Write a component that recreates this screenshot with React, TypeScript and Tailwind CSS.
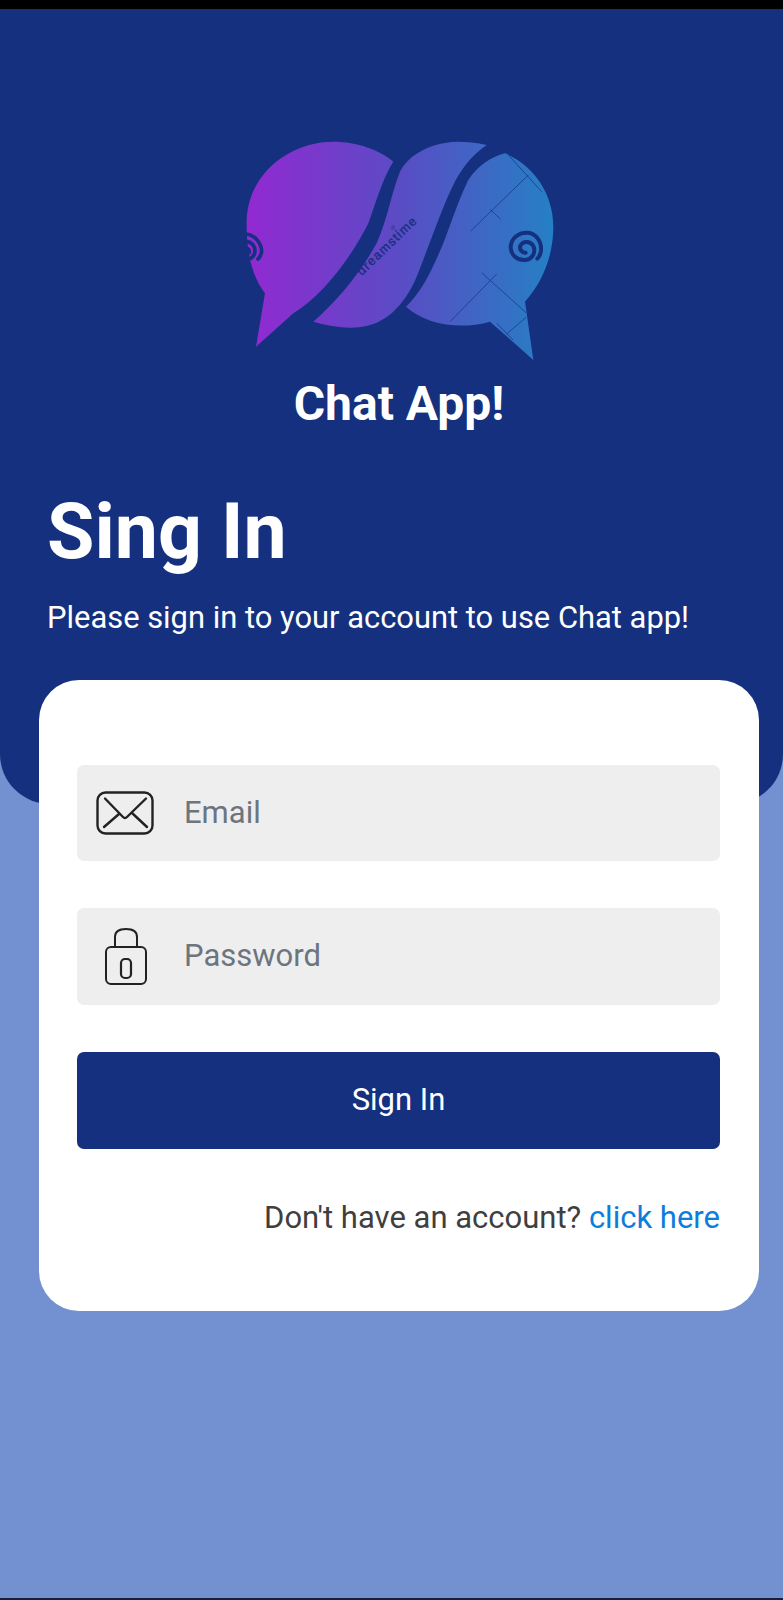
import React from "react";

function Logo() {
  return (
    <svg width="340" height="260" viewBox="0 0 1020 780" className="block">
      <defs>
        <linearGradient id="lg" gradientUnits="userSpaceOnUse" x1="80" y1="0" x2="1000" y2="0">
          <stop offset="0" stopColor="#9229d2" />
          <stop offset="0.5" stopColor="#5a4cc4" />
          <stop offset="1" stopColor="#2580c4" />
        </linearGradient>
      </defs>
      <path
        fill="url(#lg)"
        d="M108 680 L135 520 C95 470 78 390 80 300 C85 160 210 65 340 65 C410 65 480 90 520 125 C490 170 470 240 445 310 C395 410 310 525 220 580 Z"
      />
      <path
        fill="url(#lg)"
        d="M800 75 C770 68 740 65 710 65 C630 68 565 105 540 155 C515 215 505 290 470 370 C420 460 350 545 280 605 C340 622 400 630 450 615 C520 595 565 530 590 470 C630 370 660 280 695 205 C720 150 755 105 800 75 Z"
      />
      <path
        fill="url(#lg)"
        d="M855 100 C940 135 1000 220 1000 320 C1000 410 965 490 915 545 L940 720 L810 605 C720 630 620 615 558 560 C610 510 640 440 670 370 C700 290 720 230 745 180 C775 135 815 110 855 100 Z"
      />
      <g fill="none" stroke="#15307e" strokeWidth="11" strokeLinecap="round">
        <path d="M78 342 C105 345 125 370 125 395 C123 405 120 412 114 417" />
        <path d="M78 365 C95 365 105 378 105 392 C105 402 100 410 92 415" />
        <path d="M78 385 C85 385 90 390 88 398" />
      </g>
      <path
        fill="none"
        stroke="#15307e"
        strokeWidth="12"
        strokeLinecap="round"
        d="M917 398 C903 398 896 385 903 374 C912 362 932 364 940 378 C948 396 938 418 916 420 C892 422 872 405 872 380 C874 355 895 338 920 338 C945 338 965 360 963 392 C962 402 958 410 952 416"
      />
      <g fill="none" stroke="#15307e" strokeWidth="2.5" opacity="0.8">
        <path d="M752 333 L925 165" />
        <path d="M810 268 L842 298" />
        <path d="M865 105 L965 215" />
        <path d="M690 605 L830 462" />
        <path d="M785 458 L918 578" />
        <path d="M860 642 L918 592" />
        <path d="M830 610 L880 660" />
      </g>
      <text
        x="425"
        y="468"
        fontSize="38"
        fill="#15307e"
        stroke="#15307e"
        strokeWidth="1"
        textLength="232"
        fontFamily="'Liberation Sans', sans-serif"
        transform="rotate(-44 425 468)"
      >
        dreamstime
      </text>
      <text x="512" y="330" fontSize="18" fill="#15307e" fontFamily="'Liberation Sans', sans-serif">
        ®
      </text>
    </svg>
  );
}

function MailIcon() {
  return (
    <svg width="58" height="44" viewBox="0 0 58 44" fill="none" stroke="#222" strokeWidth="2.4" strokeLinecap="round" strokeLinejoin="round">
      <rect x="1.5" y="1.5" width="55" height="41" rx="8" />
      <path d="M9 7.5 L27 26 Q29 28 31 26 L50 7.5" />
      <path d="M8 36 L23 23" />
      <path d="M51 36 L36 22" />
    </svg>
  );
}

function LockIcon() {
  return (
    <svg width="44" height="58" viewBox="0 0 44 58" fill="none" stroke="#222" strokeWidth="2" strokeLinecap="round" strokeLinejoin="round">
      <rect x="2" y="19" width="40" height="37" rx="5" />
      <path d="M11 19 V9 Q11 1 22 1 Q33 1 33 9 V19" />
      <rect x="17" y="31" width="10" height="19" rx="4" strokeWidth="2.2" />
    </svg>
  );
}

export default function App() {
  return (
    <div className="w-[783px] h-[1600px] flex flex-col bg-[#7391d0] font-['Roboto',sans-serif] overflow-hidden">
      <div className="h-[9px] shrink-0 bg-black" />
      <div className="h-[795px] shrink-0 bg-[#15307e] rounded-b-[50px] pl-[47px] pr-[32px] pt-[111px] text-white">
        <div className="flex flex-col items-center">
          <div className="mr-[19px]">
            <Logo />
          </div>
          <div className="mt-[-1px] text-[48px] leading-[50px] font-bold">Chat App!</div>
        </div>
        <h1 className="mt-[61px] text-[77px] leading-[84px] font-bold">Sing In</h1>
        <p className="mt-[26px] text-[30.9px] leading-[36px] whitespace-nowrap">Please sign in to your account to use Chat app!</p>
      </div>
      <div className="mt-[-124px] ml-[39px] w-[720px] h-[631px] shrink-0 bg-white rounded-[40px] pl-[38px] pr-[39px] pt-[85px]">
        <div className="h-[96px] rounded-[7px] bg-[#eeeeef] flex items-center">
          <div className="w-[107px] pl-[19px] shrink-0">
            <MailIcon />
          </div>
          <span className="text-[31px] text-[#6c757d]">Email</span>
        </div>
        <div className="mt-[47px] h-[97px] rounded-[7px] bg-[#eeeeef] flex items-center">
          <div className="w-[107px] pl-[27px] shrink-0">
            <LockIcon />
          </div>
          <span className="text-[31px] text-[#6c757d]">Password</span>
        </div>
        <div className="mt-[47px] h-[97px] rounded-[7px] bg-[#15307e] flex items-center justify-center text-white text-[31px]">
          Sign In
        </div>
        <div className="mt-[49px] text-right text-[31px] leading-[40px] text-[#3f3f3f]">
          Don't have an account? <span className="text-[#0d7ddb]">click here</span>
        </div>
      </div>
      <div className="flex-1" />
      <div className="h-[2px] shrink-0 bg-[#15203f]" />
    </div>
  );
}
